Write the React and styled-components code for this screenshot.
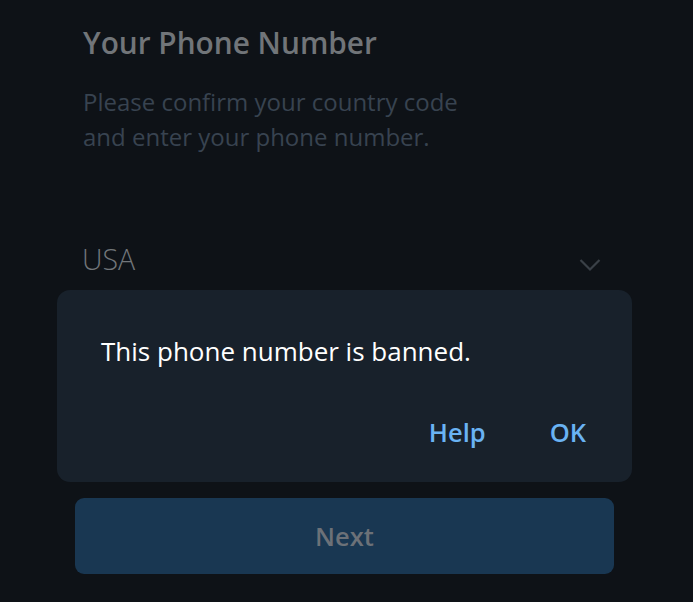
import React from "react";
import styled, { createGlobalStyle } from "styled-components";

const Global = createGlobalStyle`
  html, body { margin: 0; padding: 0; background: #0e1217; }
  body { font-family: "Open Sans", "Noto Sans", sans-serif; }
  #root { min-height: 602px; }
`;

const Page = styled.div`
  width: 693px;
  height: 602px;
  background: #0e1217;
  display: flex;
  overflow: hidden;
`;

const Form = styled.div`
  width: 539px;
  margin-left: 75px;
  display: flex;
  flex-direction: column;
  padding-top: 24px;
`;

const Title = styled.h1`
  margin: 0 0 0 8px;
  font-size: 29.8px;
  line-height: 38px;
  font-weight: 600;
  color: #717579;
`;

const Subtitle = styled.p`
  margin: 22px 0 0 8px;
  font-size: 24px;
  line-height: 35px;
  font-weight: 400;
  color: #384350;
`;

const CountryRow = styled.div`
  margin-top: 85px;
  margin-left: 7px;
  margin-right: 13px;
  display: flex;
  align-items: center;
  justify-content: space-between;
  height: 40px;
`;

const Country = styled.span`
  font-size: 28.5px;
  font-weight: 300;
  color: #72767a;
`;

const Chevron = styled.svg`
  width: 22px;
  height: 14px;
  margin-top: 12px;
`;

const Dialog = styled.div`
  margin: 11px -18px 0;
  background: #18212b;
  border-radius: 13px;
  padding: 44px 44px 33px;
  display: flex;
  flex-direction: column;
`;

const Message = styled.p`
  margin: 0;
  font-size: 26px;
  line-height: 34px;
  color: #ffffff;
`;

const Actions = styled.div`
  margin-top: 47px;
  display: flex;
  justify-content: flex-end;
  gap: 64px;
  padding-right: 2px;
`;

const ActionButton = styled.button`
  background: none;
  border: none;
  padding: 0;
  font-family: inherit;
  font-size: 25.5px;
  line-height: 34px;
  font-weight: 600;
  color: #6ab3f3;
  cursor: pointer;
`;

const NextButton = styled.button`
  margin-top: 16px;
  height: 76px;
  border: none;
  border-radius: 9px;
  background: #193752;
  font-family: inherit;
  font-size: 25.5px;
  font-weight: 600;
  color: #6c7178;
`;

export default function App() {
  return (
    <>
      <Global />
      <Page>
        <Form>
          <Title>Your Phone Number</Title>
          <Subtitle>
            Please confirm your country code
            <br />
            and enter your phone number.
          </Subtitle>
          <CountryRow>
            <Country>USA</Country>
            <Chevron viewBox="0 0 22 14">
              <path d="M1.5 2 L11 11.5 L20.5 2" fill="none" stroke="#3a4047" strokeWidth="2.2" />
            </Chevron>
          </CountryRow>
          <Dialog>
            <Message>This phone number is banned.</Message>
            <Actions>
              <ActionButton>Help</ActionButton>
              <ActionButton>OK</ActionButton>
            </Actions>
          </Dialog>
          <NextButton>Next</NextButton>
        </Form>
      </Page>
    </>
  );
}
